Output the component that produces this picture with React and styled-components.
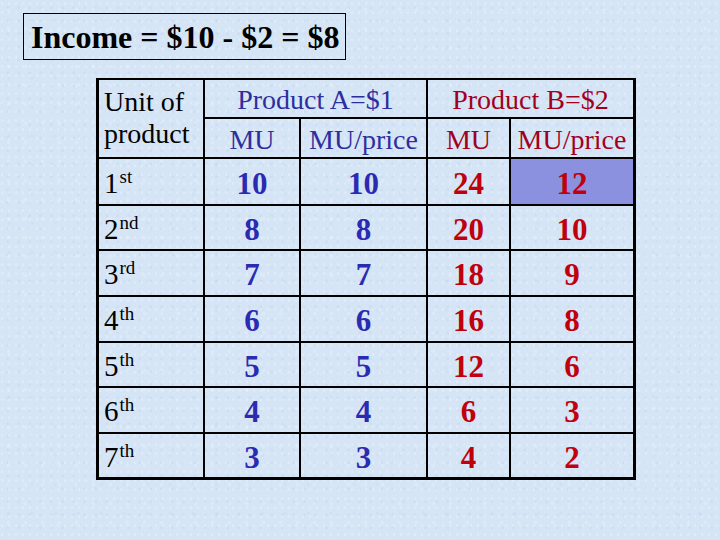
import React from 'react';
import styled, { createGlobalStyle, css } from 'styled-components';

const serif = `"Liberation Serif", "Times New Roman", "DejaVu Serif", serif`;

const paper = css`
  background-color: #d5e5f6;
  background-image:
    radial-gradient(circle at 30% 40%, rgba(255, 255, 255, 0.22) 0 1px, transparent 1.6px),
    radial-gradient(circle at 70% 60%, rgba(160, 190, 225, 0.18) 0 1px, transparent 1.8px),
    radial-gradient(circle at 50% 50%, rgba(255, 255, 255, 0.16) 0 1.5px, transparent 2.6px),
    radial-gradient(circle at 40% 70%, rgba(185, 208, 235, 0.2) 0 1.2px, transparent 2.2px);
  background-size: 7px 9px, 11px 13px, 17px 19px, 23px 29px;
  background-attachment: fixed;
`;

const GlobalStyle = createGlobalStyle`
  html, body {
    margin: 0;
    padding: 0;
    width: 720px;
    height: 540px;
    overflow: hidden;
    font-family: ${serif};
    ${paper}
  }
`;

const Page = styled.div`
  width: 720px;
  height: 540px;
  box-sizing: border-box;
  padding: 13px 0 0 23px;
  display: flex;
  flex-direction: column;
  align-items: flex-start;
  font-family: ${serif};
`;

const TitleBox = styled.div`
  height: 47px;
  box-sizing: border-box;
  border: 1px solid #000;
  padding: 0 6px 0 7px;
  display: flex;
  align-items: center;
  font-family: ${serif};
  font-size: 32px;
  font-weight: bold;
  color: #000;
  line-height: 1;
`;

const Grid = styled.div`
  margin: 18px 0 0 73px;
  display: grid;
  grid-template-columns: 104px 94px 125px 81px 122px;
  grid-template-rows: 37px 38px 45px 43px 44px 44px 43px 44px 43px;
  gap: 2px;
  background: #000;
  border: solid #000;
  border-width: 2px 3px 3px 3px;
  font-family: ${serif};
`;

const Cell = styled.div`
  ${paper}
  ${(p) => p.$highlight && css`background: #8b91df;`}
  grid-column: span ${(p) => p.$colSpan || 1};
  grid-row: span ${(p) => p.$rowSpan || 1};
  display: flex;
  align-items: center;
  justify-content: ${(p) => (p.$left ? 'flex-start' : 'center')};
  padding-left: ${(p) => (p.$left ? '5px' : '0')};
  line-height: 1;
`;

const HeadLabel = styled.div`
  font-family: ${serif};
  font-size: 28px;
  line-height: 32px;
  color: #000;
  margin-top: -2px;
`;

const HeadText = styled.span`
  font-family: ${serif};
  font-size: 28px;
  padding-top: 3px;
  color: ${(p) => (p.$red ? '#a3001c' : '#2e2e9e')};
`;

const Value = styled.span`
  font-family: ${serif};
  font-size: 31px;
  font-weight: bold;
  padding-top: 3px;
  color: ${(p) => (p.$red ? '#c0000d' : '#2b2bb2')};
`;

const Ordinal = styled.span`
  font-family: ${serif};
  font-size: 29px;
  color: #000;
  padding-top: 3px;
`;

const Sup = styled.sup`
  font-size: 19px;
  vertical-align: baseline;
  position: relative;
  top: -10px;
  margin-left: 1px;
`;

const rows = [
  ['1', 'st', 10, 10, 24, 12],
  ['2', 'nd', 8, 8, 20, 10],
  ['3', 'rd', 7, 7, 18, 9],
  ['4', 'th', 6, 6, 16, 8],
  ['5', 'th', 5, 5, 12, 6],
  ['6', 'th', 4, 4, 6, 3],
  ['7', 'th', 3, 3, 4, 2],
];

export default function App() {
  return (
    <>
      <GlobalStyle />
      <Page>
        <TitleBox>Income = $10 - $2 = $8</TitleBox>
        <Grid>
          <Cell $rowSpan={2} $left>
            <HeadLabel>
              Unit of
              <br />
              product
            </HeadLabel>
          </Cell>
          <Cell $colSpan={2}>
            <HeadText>Product A=$1</HeadText>
          </Cell>
          <Cell $colSpan={2}>
            <HeadText $red>Product B=$2</HeadText>
          </Cell>
          <Cell>
            <HeadText>MU</HeadText>
          </Cell>
          <Cell>
            <HeadText>MU/price</HeadText>
          </Cell>
          <Cell>
            <HeadText $red>MU</HeadText>
          </Cell>
          <Cell>
            <HeadText $red>MU/price</HeadText>
          </Cell>
          {rows.map(([n, suf, a, ap, b, bp], i) => (
            <React.Fragment key={n}>
              <Cell $left>
                <Ordinal>
                  {n}
                  <Sup>{suf}</Sup>
                </Ordinal>
              </Cell>
              <Cell>
                <Value>{a}</Value>
              </Cell>
              <Cell>
                <Value>{ap}</Value>
              </Cell>
              <Cell>
                <Value $red>{b}</Value>
              </Cell>
              <Cell $highlight={i === 0}>
                <Value $red>{bp}</Value>
              </Cell>
            </React.Fragment>
          ))}
        </Grid>
      </Page>
    </>
  );
}
